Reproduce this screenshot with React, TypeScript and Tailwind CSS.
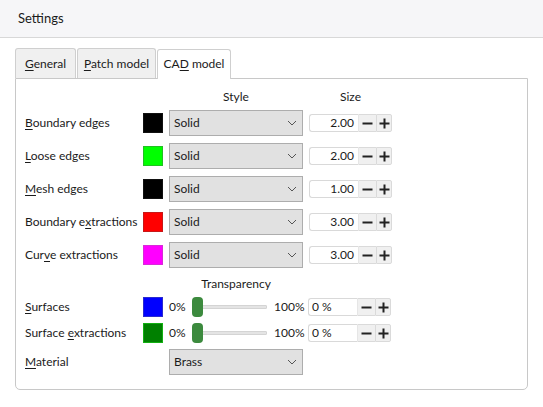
import React from 'react';

const FONT = "font-['Lato',_'Noto_Sans',_sans-serif]";

// Label text with one underlined mnemonic letter
const Mnemonic: React.FC<{ text: string; at: number }> = ({ text, at }) => (
  <span className="whitespace-nowrap">
    {text.slice(0, at)}
    <span className="underline underline-offset-2 decoration-1">{text[at]}</span>
    {text.slice(at + 1)}
  </span>
);

const Swatch: React.FC<{ color: string; h?: string }> = ({ color, h = 'h-[20px]' }) => (
  <div className={`w-[20px] ${h} shrink-0 ${color}`} />
);

const Chevron = () => (
  <svg width="10" height="6" viewBox="0 0 10 6" className="text-[#555]">
    <path d="M1 1 L5 5 L9 1" fill="none" stroke="currentColor" strokeWidth="1" />
  </svg>
);

const Select: React.FC<{ value: string }> = ({ value }) => (
  <div className="w-[134px] h-[26px] shrink-0 flex items-center justify-between bg-[#e1e1e1] border border-[#adadad] pl-[4px] pr-[5px] text-[#1b1b1b]">
    <span>{value}</span>
    <Chevron />
  </div>
);

const SpinButtons = () => (
  <>
    <div className="w-[17px] h-full flex items-center justify-center bg-[#f0f0f0] border-y border-[#dadada]">
      <svg width="11" height="11" viewBox="0 0 11 11">
        <path d="M0.5 5.5 H10.5" stroke="#222" strokeWidth="2" />
      </svg>
    </div>
    <div className="w-[16px] h-full flex items-center justify-center bg-[#f0f0f0] border border-[#dadada] rounded-r-[2px]">
      <svg width="11" height="11" viewBox="0 0 11 11">
        <path d="M0.5 5.5 H10.5 M5.5 0.5 V10.5" stroke="#222" strokeWidth="2" />
      </svg>
    </div>
  </>
);

const SpinBox: React.FC<{ value: string; left?: boolean }> = ({ value, left }) => (
  <div className="flex items-stretch h-[18px] w-[83px] shrink-0">
    <div
      className={`w-[50px] h-full flex items-center bg-white border border-[#d9d9d9] border-r-[#e6e6e6] rounded-l-[3px] ${
        left ? 'justify-start pl-[3px]' : 'justify-end pr-[4px]'
      }`}
    >
      {value}
    </div>
    <SpinButtons />
  </div>
);

const Slider = () => (
  <div className="relative w-[75px] h-[20px] shrink-0 flex items-center">
    <div className="w-full h-[4px] bg-[#e4e4e4] border border-[#d4d4d4] rounded-[1px]" />
    <div className="absolute left-0 top-0 w-[11px] h-[20px] rounded-[4px] bg-[#3c8a3e]" />
  </div>
);

const lineRows = [
  { text: 'Boundary edges', at: 0, color: 'bg-black border border-[#111]', size: '2.00' },
  { text: 'Loose edges', at: 0, color: 'bg-[#00ff00] border border-[#22c022]', size: '2.00' },
  { text: 'Mesh edges', at: 0, color: 'bg-black border border-[#111]', size: '1.00' },
  { text: 'Boundary extractions', at: 10, color: 'bg-[#ff0000] border border-[#c81818]', size: '3.00' },
  { text: 'Curve extractions', at: 3, color: 'bg-[#ff00ff] border border-[#d92ad9]', size: '3.00' },
];

const surfaceRows = [
  { text: 'Surfaces', at: 0, color: 'bg-[#0000ff] border border-[#2a2ad0]' },
  { text: 'Surface extractions', at: 8, color: 'bg-[#008000] border border-[#12b012]' },
];

export default function App() {
  return (
    <div className={`w-[543px] h-[407px] bg-white text-[12px] leading-none text-[#1b1b1b] ${FONT}`}>
      {/* Header */}
      <div className="h-[38px] bg-[#f6f6f8] border-b border-[#d8d8d8] flex items-center pl-[18px] text-[13px]">
        Settings
      </div>

      <div className="px-[15px] pt-[10px]">
        {/* Tabs */}
        <div className="flex items-end gap-[1px] h-[30px]">
          <div className="w-[61px] h-[30px] flex items-center justify-center bg-[#f0f0f0] border border-b-0 border-[#cfcfcf] rounded-t-[3px]">
            <Mnemonic text="General" at={0} />
          </div>
          <div className="w-[79px] h-[30px] flex items-center justify-center bg-[#f0f0f0] border border-b-0 border-[#cfcfcf] rounded-t-[3px]">
            <Mnemonic text="Patch model" at={0} />
          </div>
          <div className="w-[74px] h-[30px] -mb-px pb-px flex items-center justify-center bg-white border border-b-0 border-[#cfcfcf] rounded-t-[3px] relative z-10">
            <Mnemonic text="CAD model" at={2} />
          </div>
        </div>

        {/* Panel */}
        <div className="w-[513px] h-[312px] border border-[#c8c8c8] rounded-b-[5px] pl-[9px] pt-[8px]">
          <div className="flex items-center h-[20px]">
            <div className="w-[144px]" />
            <div className="w-[134px] text-center">Style</div>
            <div className="w-[6px]" />
            <div className="w-[83px] text-center">Size</div>
          </div>

          <div className="flex flex-col gap-[7px] mt-[3px]">
            {lineRows.map((r) => (
              <div key={r.text} className="flex items-center h-[26px]">
                <div className="w-[118px] shrink-0">
                  <Mnemonic text={r.text} at={r.at} />
                </div>
                <Swatch color={r.color} />
                <div className="w-[6px]" />
                <Select value="Solid" />
                <div className="w-[6px]" />
                <SpinBox value={r.size} />
              </div>
            ))}
          </div>

          <div className="flex items-center h-[20px] mt-[6px]">
            <div className="w-[144px]" />
            <div className="w-[134px] text-center">Transparency</div>
          </div>

          <div className="flex flex-col gap-[6px] mt-[3px]">
            {surfaceRows.map((r) => (
              <div key={r.text} className="flex items-center h-[20px]">
                <div className="w-[118px] shrink-0">
                  <Mnemonic text={r.text} at={r.at} />
                </div>
                <Swatch color={r.color} />
                <div className="w-[6px]" />
                <div className="w-[23px] shrink-0">0%</div>
                <Slider />
                <div className="w-[7px]" />
                <div className="w-[34px] shrink-0">100%</div>
                <SpinBox value="0 %" left />
              </div>
            ))}
          </div>

          <div className="flex items-center h-[26px] mt-[6px]">
            <div className="w-[144px] shrink-0">
              <Mnemonic text="Material" at={0} />
            </div>
            <Select value="Brass" />
          </div>
        </div>
      </div>
    </div>
  );
}
